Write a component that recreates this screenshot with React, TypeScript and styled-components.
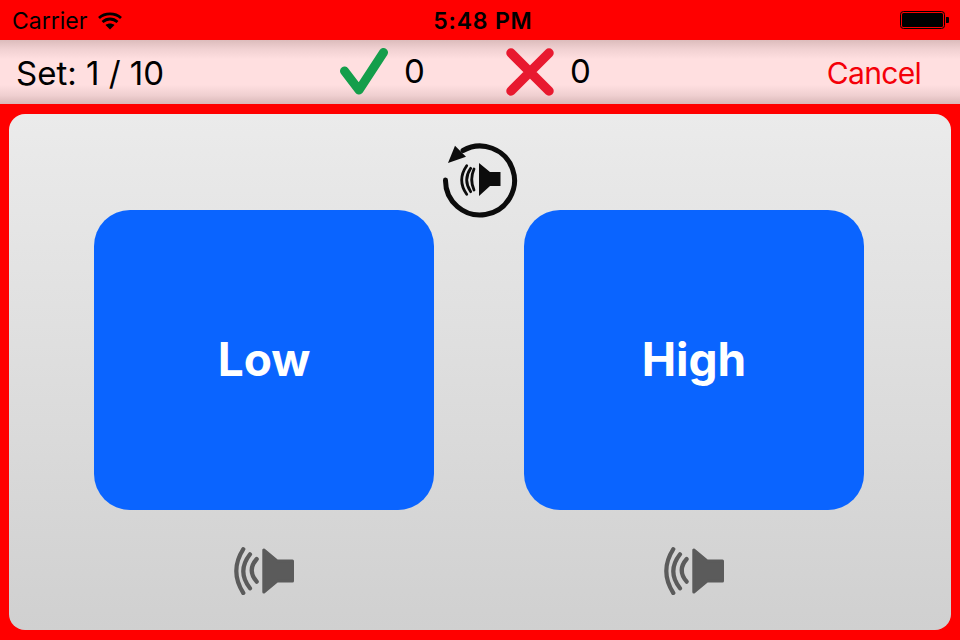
import React from "react";
import styled, { createGlobalStyle } from "styled-components";

const Global = createGlobalStyle`
  html, body { margin: 0; padding: 0; background: #ff0000; }
  body { width: 960px; height: 640px; overflow: hidden; font-family: Inter, "Liberation Sans", sans-serif; }
`;

const Screen = styled.div`
  width: 960px;
  height: 640px;
  display: flex;
  flex-direction: column;
  background: #ff0000;
`;

const StatusBar = styled.div`
  height: 40px;
  display: grid;
  grid-template-columns: 1fr auto 1fr;
  align-items: center;
  padding: 0 11px 0 12px;
  color: #000;
`;

const StatusLeft = styled.div`
  display: flex;
  align-items: center;
  gap: 11px;
  font-size: 23px;
  font-weight: 400;
  padding-top: 1px;
`;

const Clock = styled.div`
  font-size: 23px;
  font-weight: 600;
  letter-spacing: 0.8px;
  margin-left: 5px;
  padding-top: 2px;
`;

const StatusRight = styled.div`
  display: flex;
  justify-content: flex-end;
`;

const Toolbar = styled.div`
  height: 64px;
  display: flex;
  align-items: center;
  padding: 0 39px 0 16px;
  background: linear-gradient(
    to bottom,
    #dcbcbc 0%,
    #f0d0d1 14%,
    #ffdfe0 30%,
    #ffdfe0 70%,
    #f0d0d1 86%,
    #d9b8b8 100%
  );
`;

const SetLabel = styled.div`
  width: 324px;
  font-size: 33px;
  color: #000;
  line-height: 1;
  padding-top: 3px;
`;

const Score = styled.div<{ $width: number }>`
  width: ${(p) => p.$width}px;
  display: flex;
  align-items: center;
  gap: 16px;
  font-size: 33px;
  color: #000;
  line-height: 1;
`;

const ScoreValue = styled.span`
  position: relative;
  top: -1px;
`;

const ScoreIcon = styled.svg`
  width: 48px;
  height: 48px;
  display: block;
`;

const CancelLink = styled.div`
  margin-left: auto;
  font-size: 30px;
  letter-spacing: -0.7px;
  color: #f40009;
  line-height: 1;
  padding-top: 1px;
`;

const Panel = styled.div`
  margin: 10px 9px;
  height: 516px;
  border-radius: 16px;
  display: flex;
  flex-direction: column;
  align-items: center;
  background: linear-gradient(to bottom, #ebebeb, #d0d0d0);
`;

const ReplayIcon = styled.svg`
  width: 76px;
  height: 76px;
  margin-top: 28px;
  margin-bottom: -8px;
  display: block;
  position: relative;
  z-index: 1;
`;

const Choices = styled.div`
  display: grid;
  grid-template-columns: 340px 340px;
  column-gap: 90px;
  justify-items: center;
  margin-right: 2px;
`;

const ChoiceButton = styled.div`
  width: 340px;
  height: 300px;
  border-radius: 36px;
  background: #0a64ff;
  color: #fff;
  display: flex;
  align-items: center;
  justify-content: center;
  font-size: 46px;
  font-weight: 700;
  padding-bottom: 3px;
  box-sizing: border-box;
`;

const SpeakerIcon = styled.svg`
  width: 60px;
  height: 48px;
  margin-top: 37px;
  display: block;
`;

const Speaker = () => (
  <SpeakerIcon viewBox="0 0 60 48">
    <path d="M29.800 3 L29.800 45 L43 34 L58.500 34 L58.500 14 L43 14 Z" fill="#5b5b5b" stroke="#5b5b5b" strokeWidth="3" strokeLinejoin="round" />
    <g fill="none" stroke="#5b5b5b" strokeWidth="4.200" strokeLinecap="round">
      <path d="M22.700 12 Q12.700 23.300 22.700 34.700" />
      <path d="M16 7.300 Q2.600 24.300 16 41.300" />
      <path d="M9.300 2.200 Q-4.700 24 9.300 46" />
    </g>
  </SpeakerIcon>
);

export default function App() {
  return (
    <Screen>
      <Global />
      <StatusBar>
        <StatusLeft>
          Carrier
          <svg width="24" height="18" viewBox="0 0 24 18">
            <path d="M1 6 C7 0.500 17 0.500 23 6" fill="none" stroke="#000" strokeWidth="2.800" />
            <path d="M4.500 10 C9 6 15 6 19.500 10" fill="none" stroke="#000" strokeWidth="2.800" />
            <path d="M7.500 13 C10 11 14 11 16.500 13 L12 17.500 Z" fill="#000" />
          </svg>
        </StatusLeft>
        <Clock>5:48 PM</Clock>
        <StatusRight>
          <svg width="49" height="20" viewBox="0 0 49 20">
            <rect x="0.500" y="1.500" width="44" height="17" rx="3" fill="none" stroke="#000" strokeWidth="1" />
            <rect x="2" y="3" width="41" height="14" rx="1.500" fill="#000" />
            <path d="M46 7 h2 a1 1 0 0 1 1 1 v4 a1 1 0 0 1 -1 1 h-2 Z" fill="#000" />
          </svg>
        </StatusRight>
      </StatusBar>
      <Toolbar>
        <SetLabel>Set: 1 / 10</SetLabel>
        <Score $width={166}>
          <ScoreIcon viewBox="0 0 48 48">
            <path d="M4.500 23 L19 42 L43.500 4.500" fill="none" stroke="#149e4b" strokeWidth="9" strokeLinecap="round" strokeLinejoin="round" />
          </ScoreIcon>
          <ScoreValue>0</ScoreValue>
        </Score>
        <Score $width={168}>
          <ScoreIcon viewBox="0 0 48 48">
            <path d="M5 5 L43 43 M43 5 L5 43" fill="none" stroke="#e8192f" strokeWidth="9.500" strokeLinecap="round" />
          </ScoreIcon>
          <ScoreValue>0</ScoreValue>
        </Score>
        <CancelLink>Cancel</CancelLink>
      </Toolbar>
      <Panel>
        <ReplayIcon viewBox="0 0 76 76">
          <g fill="none" stroke="#0c0c0c" strokeLinecap="round">
            <path d="M21 8.500 A34.500 34.500 0 1 1 3.500 38" strokeWidth="5" />
            <g strokeWidth="2.800">
              <path d="M32 27 Q27.400 37.500 32 48" />
              <path d="M28.700 26.300 Q20.700 38 28.700 49.700" />
              <path d="M24.700 23.700 Q14.700 38 24.700 52.300" />
            </g>
          </g>
          <path d="M13 3.700 L6 21 L24 14.700 Z" fill="#0c0c0c" />
          <path d="M37 21 L37 54 L48 44 L58.500 44 L58.500 30 L48 30 Z" fill="#0c0c0c" />
        </ReplayIcon>
        <Choices>
          <ChoiceButton>Low</ChoiceButton>
          <ChoiceButton>High</ChoiceButton>
          <Speaker />
          <Speaker />
        </Choices>
      </Panel>
    </Screen>
  );
}
